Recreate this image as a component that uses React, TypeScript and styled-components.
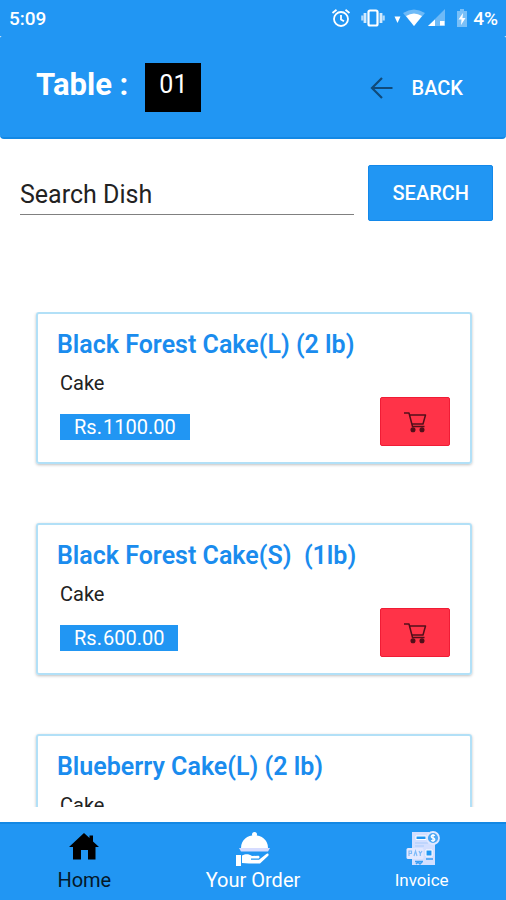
import React from "react";
import styled, { createGlobalStyle } from "styled-components";

const BLUE = "#2196f3";

const GlobalStyle = createGlobalStyle`
  * { box-sizing: border-box; }
  body { margin: 0; background: #fff; font-family: Roboto, "Open Sans", sans-serif; }
  button, input { font-family: inherit; }
`;

const Screen = styled.div`
  display: flex;
  flex-direction: column;
  height: 100vh;
  background: #fff;
`;

const StatusBar = styled.div`
  display: flex;
  align-items: center;
  flex-shrink: 0;
  height: 36px;
  padding: 0 8px 0 9px;
  background: ${BLUE};
  color: #fff;
  font-size: 19px;
  font-weight: 500;
`;

const Clock = styled.span`
  margin-right: auto;
`;

const StatusIcon = styled.svg<{ $gap: number }>`
  display: block;
  margin-right: ${(p) => p.$gap}px;
`;

const Header = styled.header`
  display: flex;
  align-items: center;
  flex-shrink: 0;
  height: 103px;
  padding: 2px 43px 0 36px;
  background: ${BLUE};
  border-bottom: 2px solid #1388e4;
  border-radius: 2px 2px 4px 4px;
  color: #fff;
`;

const TableLabel = styled.h1`
  margin: 0 17px 6px 0;
  font-size: 31px;
  line-height: 36px;
  font-weight: 700;
`;

const TableNumber = styled.span`
  padding: 6px 14px 11px;
  background: #000;
  font-size: 25px;
  line-height: 32px;
`;

const BackButton = styled.button`
  display: flex;
  align-items: center;
  gap: 18px;
  margin-left: auto;
  padding: 0;
  border: 0;
  background: none;
  color: #fff;
  font-size: 20px;
  line-height: 24px;
  font-weight: 500;
`;

const SearchRow = styled.form`
  display: flex;
  align-items: center;
  flex-shrink: 0;
  gap: 14px;
  padding: 26px 13px 0 20px;
`;

const SearchInput = styled.input`
  flex: 1;
  min-width: 0;
  height: 44px;
  padding: 4px 0 0;
  border: 0;
  border-bottom: 1px solid #808080;
  border-radius: 0;
  outline: 0;
  background: none;
  color: #222;
  font-size: 25px;
  &::placeholder { color: #222; opacity: 1; }
`;

const SearchButton = styled.button`
  height: 56px;
  padding: 0 23px;
  border: 1px solid #1388ea;
  border-radius: 2px;
  background: ${BLUE};
  color: #fff;
  font-size: 20px;
  font-weight: 500;
`;

const DishList = styled.ul`
  display: flex;
  flex: 1;
  flex-direction: column;
  gap: 59px;
  min-height: 0;
  margin: 91px 0 15px;
  padding: 0 34px 0 36px;
  overflow: hidden;
  list-style: none;
`;

const DishCard = styled.li`
  flex-shrink: 0;
  padding: 16px 20px 16px 19px;
  border: 2px solid #b2e0f7;
  border-radius: 3px;
  box-shadow: 0 1px 3px rgba(0, 0, 0, 0.25);
`;

const DishName = styled.h2`
  margin: 0;
  color: #1a8cee;
  font-size: 25px;
  line-height: 30px;
  font-weight: 600;
  white-space: pre-wrap;
`;

const DishDetails = styled.div`
  display: flex;
  align-items: flex-end;
  justify-content: space-between;
`;

const DishInfo = styled.div`
  display: flex;
  flex-direction: column;
  align-items: flex-start;
  gap: 21px;
  padding: 13px 0 6px 3px;
`;

const Category = styled.span`
  color: #222;
  font-size: 20px;
  line-height: 20px;
`;

const Price = styled.span`
  display: flex;
  gap: 1px;
  padding: 0 14px;
  background: ${BLUE};
  color: #fff;
  font-size: 20px;
  line-height: 26px;
`;

const CartButton = styled.button`
  display: flex;
  align-items: center;
  justify-content: center;
  width: 70px;
  height: 49px;
  padding: 0;
  border: 1px solid #f01c35;
  border-radius: 2px;
  background: #ff3348;
`;

const BottomNav = styled.nav`
  display: grid;
  grid-template-columns: repeat(3, 1fr);
  flex-shrink: 0;
  height: 78px;
  border-top: 2px solid #1388e4;
  background: ${BLUE};
`;

const NavLink = styled.a<{ $active?: boolean; $small?: boolean }>`
  display: flex;
  flex-direction: column;
  align-items: center;
  gap: 1px;
  padding-top: 6px;
  color: ${(p) => (p.$active ? "#04182a" : "#fff")};
  font-size: ${(p) => (p.$small ? 17 : 20)}px;
  line-height: 26px;
  text-decoration: none;
`;

const StatusIcons = () => (
  <>
    <StatusIcon $gap={10} width="20" height="20" viewBox="0 0 20 20" fill="none" stroke="#fff" strokeWidth="1.8" aria-label="Alarm">
      <circle cx="10" cy="11" r="7" />
      <path d="M10 7v4.5l3 1.8M1.5 5 5.5 1.8M18.500 5 14.500 1.800" />
    </StatusIcon>
    <StatusIcon $gap={9} width="24" height="20" viewBox="0 0 24 20" fill="none" stroke="#fff" aria-label="Vibrate">
      <rect x="7.500" y="2.500" width="9" height="15" rx="1.500" strokeWidth="2.200" />
      <path d="M4 5v10M20 5v10" strokeWidth="2.800" opacity=".8" />
      <path d="M1.300 7.500v5M22.700 7.500v5" strokeWidth="2.200" opacity=".65" />
    </StatusIcon>
    <StatusIcon $gap={2} width="7" height="16" viewBox="0 0 7 16" fill="#fff" aria-hidden="true">
      <path d="M.5 6.500h6l-3 6.500z" />
    </StatusIcon>
    <StatusIcon $gap={3} width="22" height="20" viewBox="0 0 22 20" fill="#fff" aria-label="Wi-Fi">
      <path d="M0 5Q11-2 22 5L11 18z" opacity=".35" />
      <path d="M3 8Q11 3 19 8L11 18z" />
    </StatusIcon>
    <StatusIcon $gap={10} width="18" height="20" viewBox="0 0 18 20" fill="#fff" aria-label="Signal">
      <path d="M0 18 17 1v17z" opacity=".35" />
      <path d="M0 18 7 11.500v6.500zM12 13h4.500v4.500H12z" />
    </StatusIcon>
    <StatusIcon $gap={5} width="12" height="20" viewBox="0 0 12 20" fill="#fff" aria-label="Battery charging">
      <path d="M1 3h3V1h4v2h3v16H1z" opacity=".4" />
      <path d="M7 5 2.500 11.500H5.500L5 17l4.500-7H6.500z" />
    </StatusIcon>
  </>
);

const ArrowIcon = () => (
  <svg width="24" height="24" viewBox="0 0 24 24" fill="none" stroke="#104a7a" strokeWidth="2.200" aria-hidden="true">
    <path d="M22.500 12H2.500M12 2 2 12l10 10" />
  </svg>
);

const CartIcon = () => (
  <svg width="24" height="22" viewBox="0 0 24 22" fill="none" stroke="#51101a" strokeWidth="1.500" aria-hidden="true">
    <path d="M1 2h5l3.500 13.500h12M6.500 4h16l-2.500 9H9" strokeLinejoin="round" />
    <circle cx="10" cy="18.800" r="1.800" fill="#51101a" />
    <circle cx="19" cy="18.800" r="1.800" fill="#51101a" />
  </svg>
);

const HomeIcon = () => (
  <svg width="30" height="36" viewBox="0 0 30 36" fill="#000" aria-hidden="true">
    <path d="M15 3 20.500 8V5.500H24V11.500L30 17H26.500V29.500H19V20H12V29.500H4V17H0z" />
  </svg>
);

const ServeIcon = () => (
  <svg width="36" height="36" viewBox="0 0 36 36" fill="currentColor" aria-hidden="true">
    <circle cx="19.500" cy="4.500" r="2.500" />
    <path d="M6 18C6 1 33 1 33 18z" />
    <path d="M4 18h31l-2 3.500H6z" fill="#d6dcff" />
    <path d="M1 25h5v11H1zM7 25.500c4-2 7-1.500 10 .5l6-.2c2 0 2 2.700 0 2.700h-7v1.200h8l7-5.500c2-1.500 3.500.2 2 1.800l-8 7.500H14L7 33z" />
  </svg>
);

const InvoiceIcon = () => (
  <svg width="36" height="36" viewBox="0 0 36 36" fill="none" aria-hidden="true">
    <path d="M8 2h17v4l6 8v21H8z" fill="#d3dfff" />
    <path d="M12 6h10v3.500H12zM22 20h6v6h-6z" fill="#2196f3" stroke="#fff" strokeWidth="1" />
    <path d="M11 13h13M11 16h9" stroke="#a9ccfb" strokeWidth="1.200" />
    <circle cx="29" cy="8" r="6" fill="#4da8f5" stroke="#e0e8ff" strokeWidth="1.800" />
    <path d="M31 5.500c-4-1.500-5 1.800-2 2.500s2 3.800-2 2.500M29 4v8" stroke="#fff" strokeWidth="1.300" />
    <rect x="2.500" y="18" width="17" height="11" rx="1.500" fill="#e3e8ff" />
    <path d="M5 26v-5h2.500v2.500H5M10 26l1.500-5 1.500 5M15 21l1.300 2.500L18 21M16.300 23.500V26" stroke="#7fbaf8" strokeWidth="1.200" />
    <path d="M11 31.500h8M22 29h7M12 34l2-2 2 2 2-2" stroke="#3a9ef4" strokeWidth="1.500" />
  </svg>
);

const dishes = [
  { name: "Black Forest Cake(L) (2 lb)", category: "Cake", price: "1100.00" },
  { name: "Black Forest Cake(S)  (1lb)", category: "Cake", price: "600.00" },
  { name: "Blueberry Cake(L) (2 lb)", category: "Cake", price: "1100.00" },
];

export default function App() {
  return (
    <Screen>
      <GlobalStyle />
      <StatusBar>
        <Clock>5:09</Clock>
        <StatusIcons />
        <span>4%</span>
      </StatusBar>
      <Header>
        <TableLabel>Table :</TableLabel>
        <TableNumber>01</TableNumber>
        <BackButton type="button">
          <ArrowIcon />
          BACK
        </BackButton>
      </Header>
      <SearchRow onSubmit={(e) => e.preventDefault()}>
        <SearchInput type="text" placeholder="Search Dish" aria-label="Search Dish" />
        <SearchButton type="submit">SEARCH</SearchButton>
      </SearchRow>
      <DishList>
        {dishes.map((dish) => (
          <DishCard key={dish.name}>
            <DishName>{dish.name}</DishName>
            <DishDetails>
              <DishInfo>
                <Category>{dish.category}</Category>
                <Price>
                  <span>Rs.</span>
                  <span>{dish.price}</span>
                </Price>
              </DishInfo>
              <CartButton type="button" aria-label={`Add ${dish.name} to cart`}>
                <CartIcon />
              </CartButton>
            </DishDetails>
          </DishCard>
        ))}
      </DishList>
      <BottomNav>
        <NavLink href="#home" $active>
          <HomeIcon />
          Home
        </NavLink>
        <NavLink href="#order">
          <ServeIcon />
          Your Order
        </NavLink>
        <NavLink href="#invoice" $small>
          <InvoiceIcon />
          Invoice
        </NavLink>
      </BottomNav>
    </Screen>
  );
}
